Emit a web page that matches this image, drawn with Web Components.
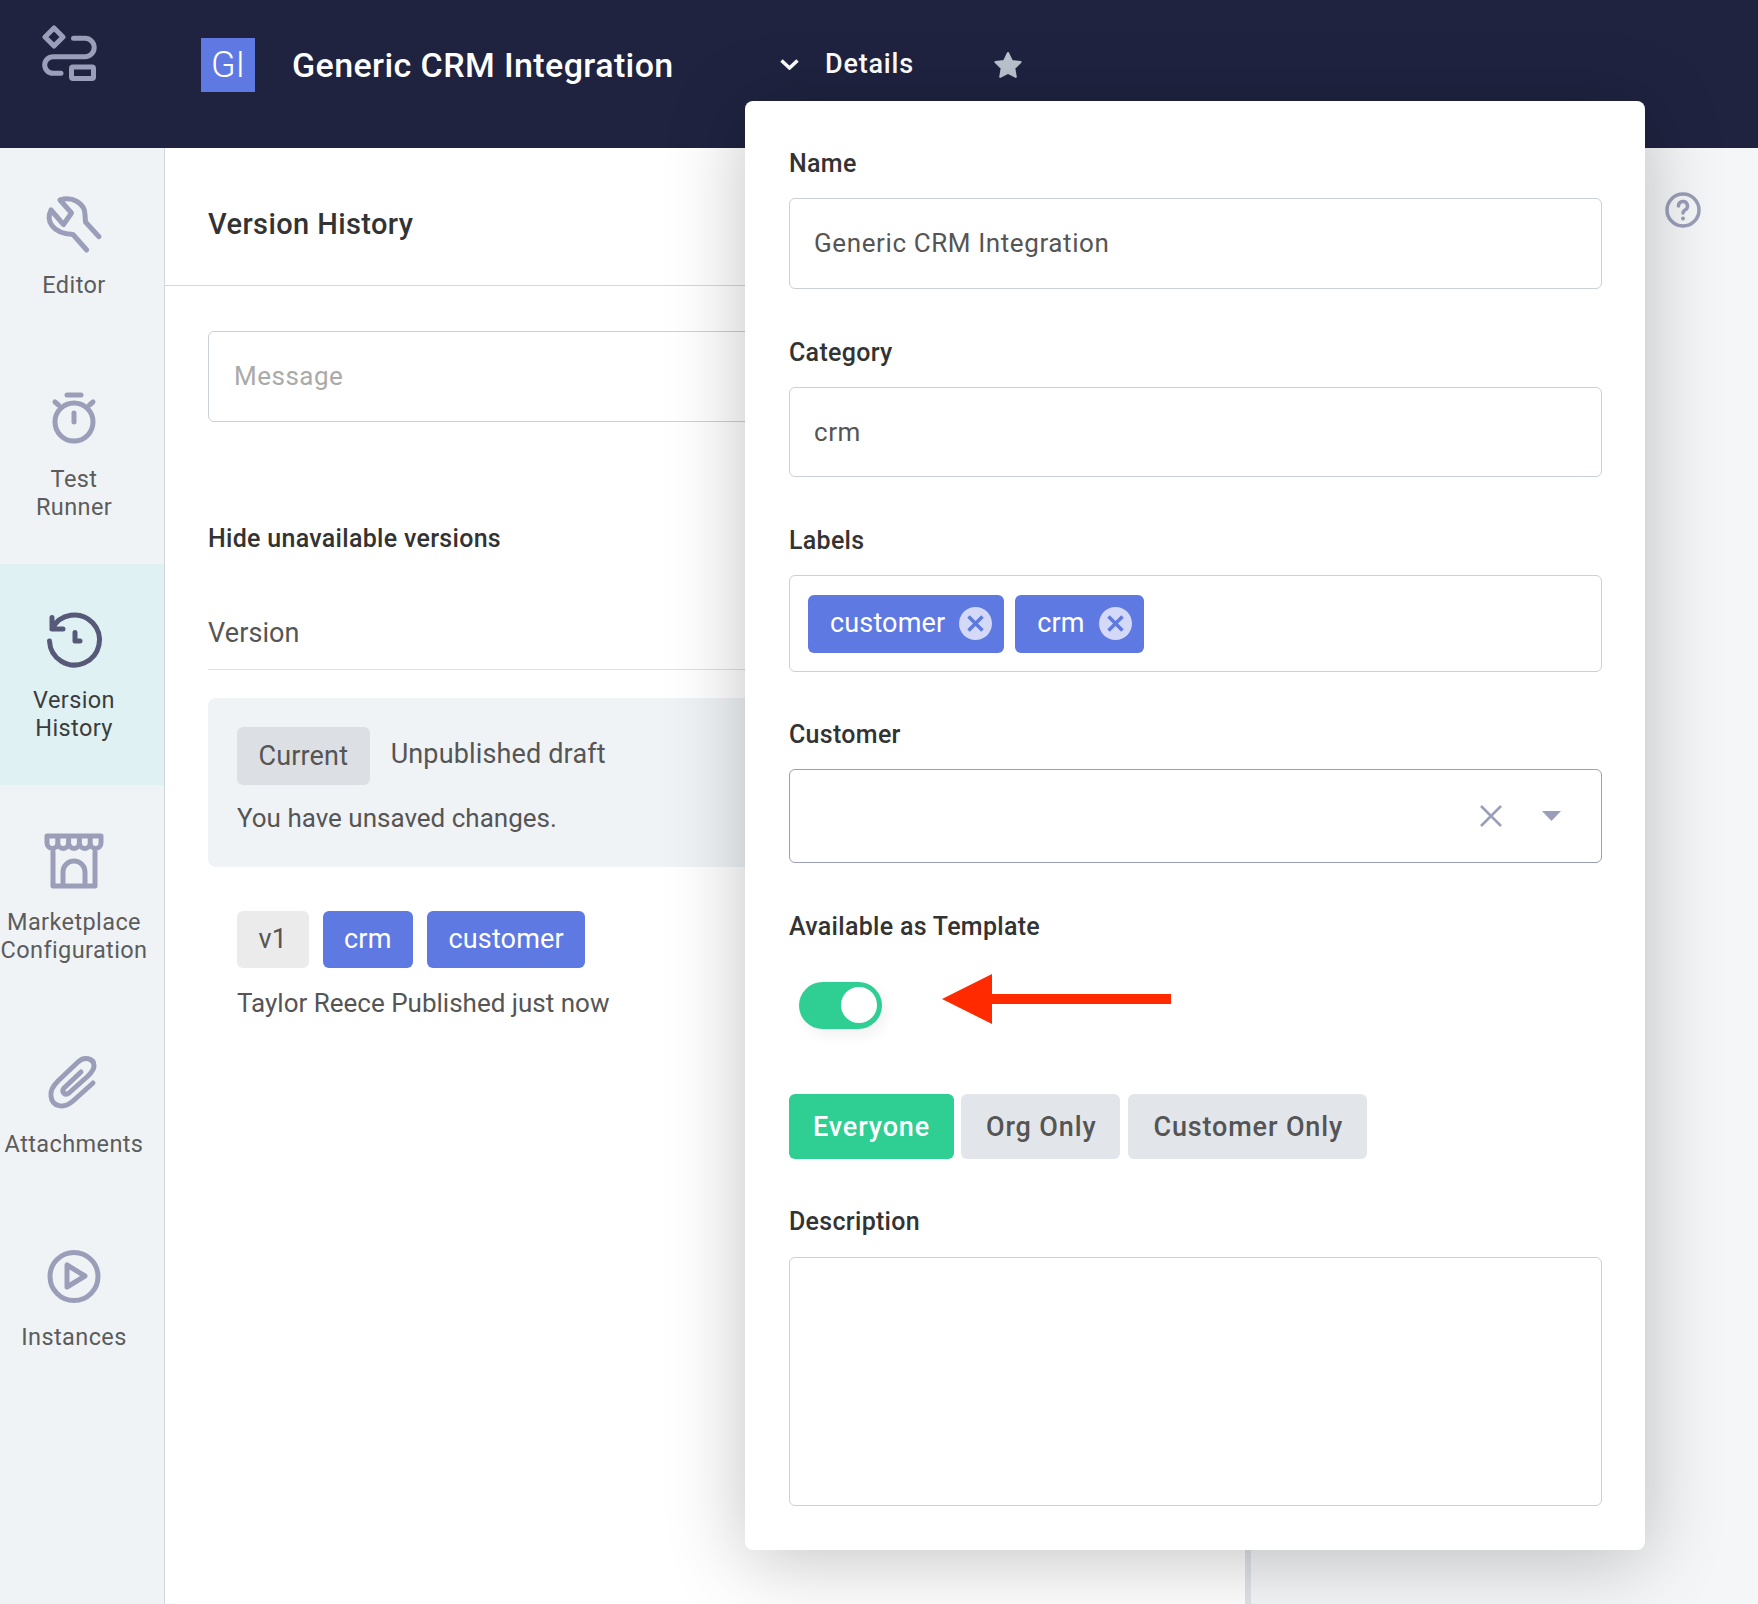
<!DOCTYPE html>
<html>
<head>
<meta charset="utf-8">
<style>
  html, body { margin: 0; height: 100%; }
  body {
    width: 1758px; height: 1604px; overflow: hidden; position: relative;
    font-family: Roboto, "Liberation Sans", sans-serif; color: #555;
    background: #f5f6f8;
  }
</style>
</head>
<body>

<app-header title="Generic CRM Integration" initials="GI"></app-header>
<div style="display:flex;height:1456px">
  <side-nav>
    <nav-item label="Editor" icon="wrench" top="47" gap="18" bot="44"></nav-item>
    <nav-item label="Test Runner" icon="timer" top="49" gap="17" bot="43"></nav-item>
    <nav-item label="Version History" icon="history" top="49" gap="17" bot="43" active></nav-item>
    <nav-item label="Marketplace Configuration" icon="store" top="49" gap="18" bot="42"></nav-item>
    <nav-item label="Attachments" icon="clip" top="49" gap="19" bot="44"></nav-item>
    <nav-item label="Instances" icon="play" top="47" gap="18" bot="44"></nav-item>
  </side-nav>
  <version-panel></version-panel>
  <right-rail></right-rail>
</div>

<details-popover>
  <form-field label="Name"><text-box>Generic CRM Integration</text-box></form-field>
  <form-field label="Category"><text-box style="height:88px">crm</text-box></form-field>
  <form-field label="Labels">
    <chip-box>
      <label-chip>customer</label-chip>
      <label-chip>crm</label-chip>
    </chip-box>
  </form-field>
  <form-field label="Customer"><select-box></select-box></form-field>
  <form-field label="Available as Template" tight>
    <template-access></template-access>
  </form-field>
  <form-field label="Description" last><text-box style="height:247px"></text-box></form-field>
</details-popover>

<script>
  // small helper, every element below is just markup + styles in a shadow root
  class Base extends HTMLElement {
    constructor() {
      super();
      this.attachShadow({mode: 'open'});
    }
    connectedCallback() {
      this.shadowRoot.innerHTML = this.render();
    }
  }

  const ICONS = {
    wrench: `<svg viewBox="9 12 60 56"><path d="M25 15 36.500 28 28.500 39.500 16 25C11 35 16 48 38 49.500L51.700 65M25 15C37 11 50 18 50 30L50.500 37 64 51.700"/></svg>`,
    timer: `<svg viewBox="0 0 60 56"><circle cx="30" cy="30" r="19"/><path d="M23 3H37M11 10 14.500 13M49 10 45.500 13M30 21V30"/></svg>`,
    history: `<svg viewBox="0 0 60 56"><path d="M8 16A25 25 0 1 1 5.500 28M8 4.500V16H19M31 19.500V28H36"/></svg>`,
    store: `<svg viewBox="0 0 60 56"><path d="M3 2H57M3 2V9a5.400 5.400 0 0 0 10.800 0V2M13.800 9a5.400 5.400 0 0 0 10.800 0V2M24.600 9a5.400 5.400 0 0 0 10.800 0V2M35.400 9a5.400 5.400 0 0 0 10.800 0V2M46.200 9a5.400 5.400 0 0 0 10.800 0V2M9 18V52H51V18M19 52V38a11 11 0 0 1 22 0V52"/></svg>`,
    clip: `<svg viewBox="0 0 60 56"><path d="M49 28 29 46C20 54 8 52 7 41 6 35 10 30 14 26L34 7C40 1 50 3 50 11 50 15 47 18 44 21L25 38C21 41 17 37 20 33L37 17"/></svg>`,
    play: `<svg viewBox="0 0 60 56"><circle cx="30" cy="27.500" r="24"/><path d="M23 16V38L41 27Z"/></svg>`
  };

  class AppHeader extends Base {
    render() {
      return `<style>
        :host { display: flex; align-items: center; height: 148px; box-sizing: border-box; padding-bottom: 18px; background: #1f2340; color: #fff; }
        .logo { width: 60px; height: 60px; margin: -20px 0 0 40px; fill: none; stroke: #9a9eb8; stroke-width: 5; stroke-linecap: round; stroke-linejoin: round; }
        .tile { width: 54px; height: 54px; margin-left: 101px; background: #5f79e3; display: flex; align-items: center; justify-content: center; font-size: 36px; font-weight: 300; }
        h1 { margin: 0 0 0 37px; font-size: 34px; font-weight: 500; letter-spacing: .4px; width: 488px; white-space: nowrap; }
        .chev { width: 19px; height: 11px; fill: none; stroke: #fff; stroke-width: 3.5; margin-top: -2px; }
        .details { margin: -2px 0 0 26px; font-size: 27px; font-weight: 500; letter-spacing: .8px; width: 168px; }
        .star { width: 30px; height: 28px; fill: #bcc5cf; margin-top: -1px; }
      </style>
      <svg class="logo" viewBox="0 0 60 60">
        <path d="M14 3 23 12 14 21 5 12Z"/>
        <path d="M33.500 13.300H45a9.200 9.200 0 0 1 0 18.400H13a8.300 8.300 0 0 0 0 16.600H21"/>
        <rect x="31.500" y="42" width="22" height="11.500" rx="1.500"/>
      </svg>
      <div class="tile">${this.getAttribute('initials')}</div>
      <h1>${this.getAttribute('title')}</h1>
      <svg class="chev" viewBox="0 0 19 11"><path d="M1.500 1.500 9.500 9 17.500 1.500"/></svg>
      <div class="details">Details</div>
      <svg class="star" viewBox="0 0 30 28"><path stroke="#bcc5cf" stroke-width="2" stroke-linejoin="round" d="M15 2 18.900 9.900 27.600 11.100 21.300 17.200 22.800 25.900 15 21.800 7.200 25.900 8.700 17.200 2.400 11.100 11.100 9.900Z"/></svg>`;
    }
  }

  class SideNav extends Base {
    render() {
      return `<style>
        :host { display: block; flex: none; width: 165px; box-sizing: border-box; padding-top: 2px; background: #f0f3f6; border-right: 1px solid #d0d7df; }
      </style><slot></slot>`;
    }
  }

  class NavItem extends Base {
    render() {
      const active = this.hasAttribute('active');
      const top = this.getAttribute('top'), gap = this.getAttribute('gap'), bot = this.getAttribute('bot');
      return `<style>
        :host { display: block; background: ${active ? '#e0f1f4' : 'transparent'}; }
        .in { width: 148px; padding: ${top}px 0 ${bot}px; display: flex; flex-direction: column; align-items: center; text-align: center; }
        svg { width: 60px; height: 56px; fill: none; stroke: ${active ? '#565a78' : '#9a9eb8'}; stroke-width: 5; stroke-linecap: round; stroke-linejoin: round; overflow: visible; }
        span { display: block; margin-top: ${gap}px; font-size: 23.500px; line-height: 28px; letter-spacing: .4px; color: ${active ? '#3c3c3c' : '#5c5c5c'}; white-space: normal; }
      </style>
      <div class="in">${ICONS[this.getAttribute('icon')]}<span>${this.getAttribute('label').replace(' ', '<br>')}</span></div>`;
    }
  }

  class TagBadge extends Base {
    render() {
      const bg = this.getAttribute('bg') || '#ebebeb';
      const fg = this.getAttribute('fg') || '#555';
      return `<style>
        :host { display: inline-flex; align-items: center; box-sizing: border-box; height: 57px; padding: 0 21.500px 2px; border-radius: 6px; font-size: 27px; letter-spacing: .15px; background: ${bg}; color: ${fg}; }
      </style><slot></slot>`;
    }
  }

  class VersionPanel extends Base {
    render() {
      return `<style>
        :host { display: block; width: 1080px; flex: none; background: #fff; }
        h2 { margin: 0; height: 137px; line-height: 153px; padding-left: 43px; font-size: 29px; font-weight: 500; letter-spacing: .4px; color: #333; border-bottom: 1px solid #d0d7df; }
        .body { padding: 45px 43px 0; }
        .msg { height: 89px; line-height: 89px; border: 1px solid #c9d0d8; border-radius: 6px; padding-left: 25px; font-size: 26px; letter-spacing: .5px; color: #aaa; }
        h3 { margin: 103px 0 0; font-size: 25px; line-height: 28px; font-weight: 500; letter-spacing: .3px; color: #333; }
        .col { margin-top: 66px; padding-bottom: 22px; border-bottom: 1px solid #dde2e7; font-size: 27px; line-height: 28px; letter-spacing: .1px; }
        .card { margin-top: 28px; height: 140px; padding: 29px 29px 0; border-radius: 8px; background: #f0f3f6; font-size: 26px; }
        .row { display: flex; align-items: center; gap: 21px; }
        .row span { margin-top: -4px; font-size: 27px; letter-spacing: .15px; }
        .note { margin-top: 19px; line-height: 28px; }
        .tags { margin: 44px 0 0 29px; display: flex; gap: 14px; }
        .by { margin: 21px 0 0 29px; font-size: 26px; line-height: 28px; }
      </style>
      <h2>Version History</h2>
      <div class="body">
        <div class="msg">Message</div>
        <h3>Hide unavailable versions</h3>
        <div class="col">Version</div>
        <div class="card">
          <div class="row"><tag-badge bg="#dcdfe3" style="height:58px;padding-bottom:0">Current</tag-badge><span>Unpublished draft</span></div>
          <div class="note">You have unsaved changes.</div>
        </div>
        <div class="tags">
          <tag-badge>v1</tag-badge>
          <tag-badge bg="#5f79e3" fg="#fff">crm</tag-badge>
          <tag-badge bg="#5f79e3" fg="#fff">customer</tag-badge>
        </div>
        <div class="by">Taylor Reece Published just now</div>
      </div>`;
    }
  }

  class RightRail extends Base {
    render() {
      return `<style>
        :host { display: block; flex: 1; border-left: 6px solid #dfe3e7; padding: 44px 0 0 414px; }
        svg { display: block; width: 36px; height: 36px; fill: none; stroke: #9a9eb8; stroke-width: 3.500; stroke-linecap: round; stroke-linejoin: round; }
        circle.d { fill: #9a9eb8; stroke: none; }
      </style>
      <svg viewBox="0 0 36 36"><circle cx="18" cy="18" r="16"/><path d="M13.500 14a4.500 4.500 0 1 1 6.500 4c-1.500.8-2 1.500-2 3"/><circle class="d" cx="18" cy="26.500" r="2"/></svg>`;
    }
  }

  class DetailsPopover extends Base {
    render() {
      return `<style>
        :host { display: block; position: absolute; left: 745px; top: 101px; width: 900px; box-sizing: border-box; padding: 49px 43px 44px 44px; background: #fff; border-radius: 8px; box-shadow: 0 10px 80px rgba(0,0,0,.24); }
      </style><slot></slot>`;
    }
  }

  class FormField extends Base {
    render() {
      const last = this.hasAttribute('last');
      return `<style>
        :host { display: block; margin-bottom: ${last ? 0 : this.hasAttribute('tight') ? 49 : 50}px; }
        label { display: block; font-size: 25px; line-height: 28px; font-weight: 500; letter-spacing: .3px; color: #333; margin-bottom: ${last ? 21 : 20}px; }
      </style><label>${this.getAttribute('label')}</label><slot></slot>`;
    }
  }

  class TextBox extends Base {
    render() {
      return `<style>
        :host { display: block; height: 89px; border: 1px solid #c9d0d8; border-radius: 6px; padding: 0 24px; font-size: 26px; letter-spacing: .6px; line-height: 89px; color: #555; }
      </style><slot></slot>`;
    }
  }

  class ChipBox extends Base {
    render() {
      return `<style>
        :host { display: flex; align-items: center; gap: 11px; height: 95px; padding-left: 18px; border: 1px solid #c9d0d8; border-radius: 6px; margin-bottom: -1px; }
      </style><slot></slot>`;
    }
  }

  class LabelChip extends Base {
    render() {
      return `<style>
        :host { display: inline-flex; align-items: center; height: 58px; padding: 0 12px 0 22px; border-radius: 6px; background: #5f79e3; color: #fff; font-size: 27px; letter-spacing: .15px; }
        span { padding-bottom: 2px; }
        svg { width: 33px; height: 33px; margin-left: 14px; }
      </style><span><slot></slot></span>
      <svg viewBox="0 0 33 33"><circle cx="16.500" cy="16.500" r="16.500" fill="#d3d9f6"/><path d="M9.500 9.500 23.500 23.500M23.500 9.500 9.500 23.500" stroke="#5f79e3" stroke-width="3.500"/></svg>`;
    }
  }

  class SelectBox extends Base {
    render() {
      return `<style>
        :host { display: flex; align-items: center; justify-content: flex-end; height: 92px; border: 1px solid #9a9eb8; border-radius: 6px; padding-right: 40px; }
        svg { display: block; }
      </style>
      <svg width="22" height="22" viewBox="0 0 22 22" style="margin-right:40px"><path d="M1 1 21 21M21 1 1 21" stroke="#9a9eb8" stroke-width="2.500"/></svg>
      <svg width="19" height="10" viewBox="0 0 19 10"><path d="M0 0H19L9.500 10Z" fill="#9a9eb8"/></svg>`;
    }
  }

  class TemplateAccess extends Base {
    render() {
      return `<style>
        :host { display: block; position: relative; padding-top: 21px; }
        .toggle { width: 83px; height: 47px; margin-left: 10px; box-sizing: border-box; padding: 5px 5px 0 0; border-radius: 24px; background: #2fcf94; box-shadow: 4px 6px 14px rgba(0,0,0,.06); display: flex; justify-content: flex-end; }
        .knob { width: 36px; height: 36px; border-radius: 50%; background: #fff; }
        .arrow { position: absolute; left: 153px; top: 13px; }
        .btns { display: flex; gap: 7px; margin-top: 65px; }
        button { height: 65px; border: 0; border-radius: 6px; padding: 0 24px 0 25px; font: 500 27px Roboto, "Liberation Sans", sans-serif; letter-spacing: .85px; background: #e2e6eb; color: #555; }
        button.on { background: #2fcf94; color: #fff; padding: 0 24px; }
        button:last-child { margin-left: 1px; }
      </style>
      <div class="toggle"><div class="knob"></div></div>
      <svg class="arrow" width="230" height="50" viewBox="0 0 230 50"><path d="M0 25 50 0V20H229V30H50V50Z" fill="#ff2a00"/></svg>
      <div class="btns"><button class="on">Everyone</button><button>Org Only</button><button>Customer Only</button></div>`;
    }
  }

  customElements.define('app-header', AppHeader);
  customElements.define('side-nav', SideNav);
  customElements.define('nav-item', NavItem);
  customElements.define('tag-badge', TagBadge);
  customElements.define('version-panel', VersionPanel);
  customElements.define('right-rail', RightRail);
  customElements.define('details-popover', DetailsPopover);
  customElements.define('form-field', FormField);
  customElements.define('text-box', TextBox);
  customElements.define('chip-box', ChipBox);
  customElements.define('label-chip', LabelChip);
  customElements.define('select-box', SelectBox);
  customElements.define('template-access', TemplateAccess);
</script>
</body>
</html>
